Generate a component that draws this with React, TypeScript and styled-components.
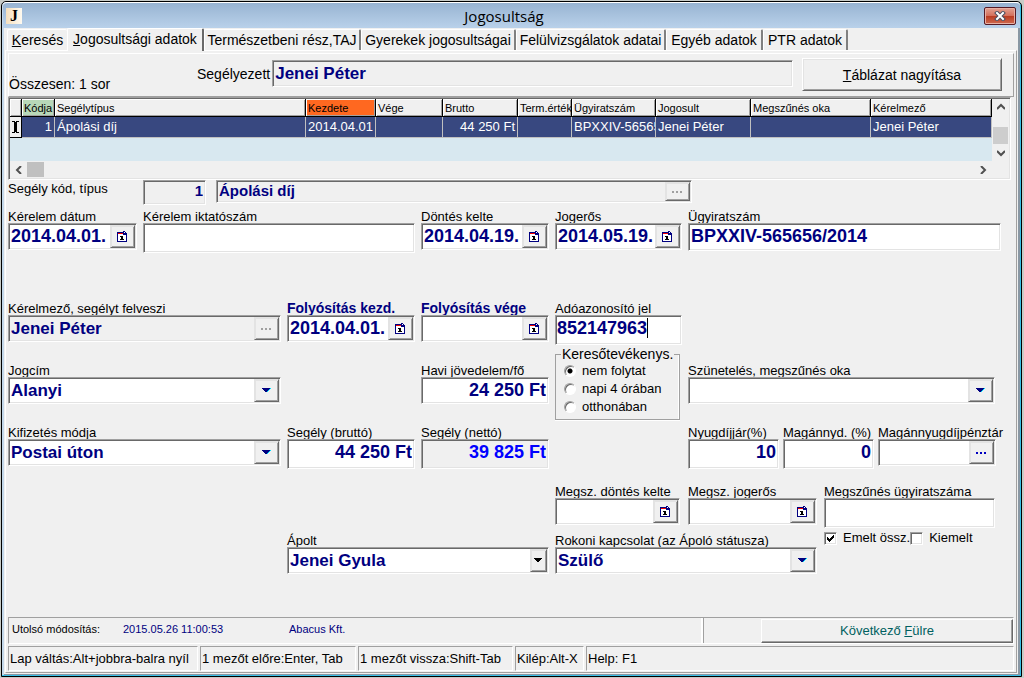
import React from 'react';
import styled, { createGlobalStyle, css } from 'styled-components';

const face = '#f0f0f0';
const shade = '#a0a0a0';
const dark = '#696969';
const light = '#e3e3e3';
const navy = '#000080';

const Global = createGlobalStyle`
  *, *::before, *::after { box-sizing: border-box; }
  html, body { margin: 0; }
  body { background: #c8ccc8; color: #000; font: 14px/16px "Liberation Sans", Arial, sans-serif; }
  button, input, select { font: inherit; color: inherit; margin: 0; border-radius: 0; }
`;

const sunken = css`
  border: 1px solid;
  border-color: ${shade} #fff #fff ${shade};
  box-shadow: inset 1px 1px ${dark}, inset -1px -1px ${light};
  padding: 1px;
`;
const raised = css`
  border: 1px solid;
  border-color: #fff ${dark} ${dark} #fff;
  box-shadow: inset 1px 1px ${light}, inset -1px -1px ${shade};
`;

const Window = styled.main`
  display: flex;
  flex-direction: column;
  min-height: calc(100vh - 2px);
  margin: 1px 2px 1px 1px;
  border: 1px solid #000;
  border-radius: 5px 5px 0 0;
  background: ${face};
  box-shadow: inset -1px -1px #38c0e8, inset 2px 0 #c4d8ea, inset -3px -2px #8a97a3;
`;
const TitleBar = styled.header`
  display: grid;
  grid-template-columns: 32px 1fr 48px;
  align-items: center;
  height: 26px;
  margin: 0 1px;
  padding: 0 2px 0 3px;
  border-top: 1px solid #fff;
  border-radius: 4px 4px 0 0;
  background: linear-gradient(#98b4d2, #b9d1ea);
`;
const AppIcon = styled.span`
  width: 16px;
  height: 16px;
  background: linear-gradient(90deg, #f5dfbd, #fffaf0);
  font: bold 16px/16px "Liberation Serif", serif;
  text-align: center;
`;
const Title = styled.h1`
  margin: 0;
  font: 15px/22px "Open Sans", sans-serif;
  text-align: center;
`;
const Close = styled.button`
  justify-self: end;
  display: grid;
  place-items: center;
  width: 32px;
  height: 18px;
  margin-right: 2px;
  padding: 0;
  border: 1px solid #551a25;
  border-radius: 2px;
  background: linear-gradient(#e2a292, #d4705c 48%, #b83a20 50%, #cf6a50);
  box-shadow: inset 0 0 0 1px #e8b0a4;
`;
const Tabs = styled.nav`
  display: flex;
  align-items: flex-end;
  height: 22px;
  margin: 0 5px;
`;
const Tab = styled.button<{ $active?: boolean; $width: number }>`
  flex: 0 1 ${p => p.$width}px;
  height: ${p => (p.$active ? 23 : 21)}px;
  margin-bottom: ${p => (p.$active ? -1 : 0)}px;
  padding: 0 0 ${p => (p.$active ? 3 : 0)}px;
  border: 0 solid #fff;
  border-width: 1px 0 0 1px;
  border-right: 2px solid ${p => (p.$active ? dark : '#808080')};
  border-radius: 2px 2px 0 0;
  background: ${face};
  white-space: nowrap;
  ${p => p.$active && 'position: relative;'}
`;
const FirstTab = styled(Tab)`
  border-right-width: 0;
`;
const Page = styled.section`
  flex: 1;
  display: flex;
  flex-direction: column;
  margin: 0 4px 3px 3px;
  padding: 2px 0 0 2px;
  border: 0 solid #fff;
  border-width: 1px 0 0 1px;
  border-right: 1px solid ${shade};
  border-bottom: 1px solid ${shade};
`;
const Inner = styled.div`
  flex: 1;
  display: flex;
  flex-direction: column;
  margin-right: 2px;
`;
const Summary = styled.div`
  display: flex;
  height: 44px;
  border: 1px solid;
  border-color: #fff ${shade} ${shade} #fff;
`;
const RowCount = styled.span`
  width: 188px;
  padding-top: 22px;
  white-space: nowrap;
`;
const Beneficiary = styled.label`
  flex: 1;
  display: flex;
  gap: 2px;
  padding: 6px 9px 10px 0;
  white-space: nowrap;
  span { padding-top: 6px; }
  div { flex: 1; }
`;
const Enlarge = styled.button`
  ${raised}
  width: 200px;
  height: 33px;
  margin: 4px 11px 0 0;
  background: ${face};
`;

const GridFrame = styled.div`
  ${sunken}
  display: grid;
  grid-template-columns: 1fr 17px;
  grid-template-rows: 62px 17px;
  margin-right: 3px;
`;
const GridBody = styled.div`
  overflow: hidden;
  background: #d8e8f0;
`;
const Table = styled.table`
  width: 100%;
  table-layout: fixed;
  border-collapse: separate;
  border-spacing: 0;
`;
const Th = styled.th<{ $bg?: string }>`
  height: 18px;
  padding: 0 0 0 2px;
  overflow: hidden;
  border: 0 solid #000;
  border-width: 0 1px 1px 0;
  background: ${p => p.$bg || face};
  box-shadow: inset 1px 1px #fff, inset -1px -1px ${shade};
  font: 11px/16px "Liberation Sans", sans-serif;
  text-align: left;
  white-space: nowrap;
`;
const Td = styled.td<{ $right?: boolean }>`
  height: 21px;
  padding: 0 2px;
  overflow: hidden;
  border: 0 solid #c0c0c0;
  border-width: 0 1px 1px 0;
  background: #384880;
  color: #fff;
  font: 13px/18px "Liberation Sans", sans-serif;
  text-align: ${p => (p.$right ? 'right' : 'left')};
  white-space: nowrap;
`;
const Marker = styled(Td)`
  padding: 0;
  border-color: #000;
  background: ${face};
  color: #000;
  svg { display: block; margin: 0 auto; }
`;
const VScroll = styled.div`
  display: flex;
  flex-direction: column;
  align-items: center;
  justify-content: space-between;
  padding: 4px 0;
`;
const VThumb = styled.span`
  width: 15px;
  height: 17px;
  margin: 11px 0 0;
  background: #cdcdcd;
`;
const HScroll = styled.div`
  display: flex;
  align-items: center;
  gap: 4px;
  padding: 0 5px;
  svg:last-child { margin-left: auto; }
`;
const HThumb = styled.span`
  width: 17px;
  height: 15px;
  background: #c0c0c0;
`;

const TypeRow = styled.div`
  display: grid;
  grid-template-columns: 125px 63px 476px;
  align-items: start;
  height: 28px;
  column-gap: 10px;
`;
const Form = styled.form`
  display: grid;
  grid-template-columns: 129fr 138fr 128fr 128fr 127fr 326fr;
  grid-template-rows: 92px 62px 62px 59px 49px auto;
  column-gap: 6px;
  align-items: start;
`;
const Area = styled.div<{ $col: string; $row: string }>`
  grid-column: ${p => p.$col};
  grid-row: ${p => p.$row};
  min-width: 0;
`;
const Caption = styled.label<{ $strong?: boolean }>`
  display: block;
  height: 15px;
  font-size: 13px;
  line-height: 17px;
  white-space: nowrap;
  ${p => p.$strong && css`
    color: ${navy};
    font-size: 14px;
    font-weight: bold;
  `}
`;
const FieldWrap = styled.div`
  min-width: 0;
`;
const Box = styled.div<{ $h?: number; $ro?: boolean }>`
  ${sunken}
  position: relative;
  display: flex;
  height: ${p => p.$h || 27}px;
  background: ${p => (p.$ro ? face : '#fff')};
`;
const valueText = css<{ $num?: boolean; $color?: string }>`
  flex: 1;
  min-width: 0;
  border: 0;
  outline: 0;
  background: transparent;
  color: ${p => p.$color || navy};
  font: bold ${p => (p.$num ? 18 : 17)}px/20px "Liberation Sans", sans-serif;
`;
const Value = styled.input<{ $num?: boolean; $right?: boolean; $color?: string }>`
  ${valueText}
  height: 23px;
  padding: 0 1px;
  text-align: ${p => (p.$right ? 'right' : 'left')};
`;
const SmallValue = styled(Value)`
  height: 18px;
  font-size: 15px;
  line-height: 18px;
`;
const CaretValue = styled(Value)`
  flex: none;
  field-sizing: content;
  padding: 0;
`;
const Caret = styled.i`
  width: 1px;
  height: 20px;
  margin-top: 1px;
  background: #000;
`;
const Choice = styled.select`
  ${valueText}
  appearance: none;
  height: 23px;
  padding: 0 1px;
`;
const FieldButton = styled.button<{ $w?: number }>`
  ${raised}
  border-color: ${light} ${dark} ${dark} ${light};
  display: grid;
  place-items: center;
  flex: none;
  width: ${p => p.$w || 25}px;
  padding: 0;
  background: ${face};
`;
const Arrow = styled.span<{ $w?: number }>`
  ${raised}
  border-color: ${light} ${dark} ${dark} ${light};
  display: grid;
  place-items: center;
  flex: none;
  width: ${p => p.$w || 25}px;
  background: ${face};
`;
const Group = styled.fieldset`
  display: flex;
  flex-direction: column;
  gap: 2px;
  height: 73px;
  margin: 2px 2px 0 0;
  padding: 1px 0 0 8px;
  border: 1px solid ${shade};
  box-shadow: inset -1px 0 #fff, 0 1px #fff;
  legend { margin-left: -3px; padding: 0 1px; line-height: 15px; white-space: nowrap; }
`;
const Option = styled.label`
  display: flex;
  align-items: center;
  gap: 6px;
  font-size: 13px;
  white-space: nowrap;
`;
const Radio = styled.input`
  appearance: none;
  width: 12px;
  height: 12px;
  border: 1px solid;
  border-color: ${shade} #fff #fff ${shade};
  border-radius: 50%;
  background: #fff;
  box-shadow: inset 1px 1px ${dark};
  &:checked { background: radial-gradient(circle, #000 0 2px, #fff 3px); }
`;
const Check = styled.input`
  ${sunken}
  appearance: none;
  width: 13px;
  height: 13px;
  background: #fff;
`;
const CheckBox = styled.span`
  display: grid;
  > * { grid-area: 1 / 1; }
  svg { z-index: 1; pointer-events: none; }
`;
const Checks = styled.div`
  display: flex;
  align-items: center;
  padding-top: 2px;
`;
const Bottom = styled.div`
  display: grid;
  grid-template-columns: 262fr 171fr 12fr;
  column-gap: 7px;
`;
const Pair = styled.div`
  display: grid;
  grid-template-columns: 125fr 129fr;
  column-gap: 8px;
  height: 49px;
`;
const Pension = styled.div`
  display: grid;
  grid-template-columns: 91fr 91fr 118fr 14fr;
  column-gap: 4px;
`;
const Indent = styled.div<{ $right: number }>`
  padding-right: ${p => p.$right}px;
`;

const Modified = styled.div`
  display: grid;
  grid-template-columns: 695fr 309fr;
  height: 27px;
  margin-top: auto;
  border: 1px solid;
  border-color: ${shade} #fff #fff ${shade};
  font: 11px/22px "Liberation Sans", sans-serif;
`;
const ModifiedInfo = styled.div`
  display: grid;
  grid-template-columns: 111px 166px 1fr;
  padding-left: 3px;
  border-right: 1px solid ${shade};
  box-shadow: inset -2px 0 #fff;
  color: ${navy};
  b { color: #000; font-weight: normal; }
`;
const NextWrap = styled.div`
  display: flex;
  padding: 1px 0 0 57px;
`;
const Next = styled.button`
  flex: 1;
  border: 1px solid;
  border-color: #fff ${dark} ${dark} #fff;
  box-shadow: inset -1px -1px ${shade};
  background: ${face};
  color: #006060;
  font: 13px/16px "Liberation Sans", sans-serif;
`;
const Hints = styled.footer`
  display: grid;
  grid-template-columns: 190px 156px 155px 69px 1fr;
  column-gap: 2px;
  margin: 2px 0 1px;
`;
const Hint = styled.span`
  height: 25px;
  padding-left: 1px;
  border: 1px solid;
  border-color: ${shade} #fff #fff ${shade};
  font-size: 13px;
  line-height: 23px;
  white-space: nowrap;
`;

const Triangle = ({ color = navy }: { color?: string }) => (
  <svg width="9" height="5" viewBox="0 0 9 5" shapeRendering="crispEdges">
    {color === navy && <path d="M2 0h7v1H8v1H7v1H6v1H5z" fill="#00e0ff" />}
    <path d="M0 0h8v1H7v1H6v1H5v1H3V3H2V2H1V1H0z" fill={color} />
  </svg>
);
const Dots = ({ color = '#0000c0' }: { color?: string }) => (
  <svg width="11" height="2" viewBox="0 0 11 2" shapeRendering="crispEdges">
    <path d="M0 0h2v2H0zM4 0h2v2H4zM8 0h2v2H8z" fill={color} />
  </svg>
);
const Calendar = () => (
  <svg width="11" height="11" viewBox="0 0 11 11" shapeRendering="crispEdges">
    <path d="M0 1h6V0h2v1h1v1h1v9H0z" fill={navy} />
    <path d="M1 3h5v1h3v6H1z" fill="#fff" />
    <path d="M7 1h1v1H7z" fill="#fff" />
    <path d="M1 2h5v1H1z" fill="#f00000" />
    <path d="M4 5h2v3h1v1H3V8h1V6H3V5h1z" fill="#000" />
  </svg>
);
const Chevron = ({ d }: { d: string }) => (
  <svg width="8" height="8" viewBox="0 0 8 8">
    <path d={d} fill="none" stroke="#505050" strokeWidth="2" />
  </svg>
);
const Tick = () => (
  <svg width="13" height="13" viewBox="0 0 13 13" shapeRendering="crispEdges">
    <path d="M3 5h1v1h1v1h1V6h1V5h1V4h1V3h1v3H9v1H8v1H7v1H6v1H5V9H4V8H3z" fill="#000" />
  </svg>
);

type FieldProps = {
  id: string; label: string; value?: string; strong?: boolean; kind?: 'date' | 'dots';
  h?: number; ro?: boolean; num?: boolean; right?: boolean; color?: string;
};
const Field = ({ id, label, value = '', strong, kind, h, ro, num, right, color }: FieldProps) => (
  <FieldWrap>
    <Caption htmlFor={id} $strong={strong}>{label}</Caption>
    <Box $h={h} $ro={ro}>
      <Value id={id} defaultValue={value} readOnly={ro} $num={num || kind === 'date'} $right={right} $color={color} />
      {kind === 'date' && <FieldButton type="button" aria-label="Naptár"><Calendar /></FieldButton>}
      {kind === 'dots' && <FieldButton type="button" aria-label="Tallózás"><Dots color={ro ? shade : undefined} /></FieldButton>}
    </Box>
  </FieldWrap>
);
const Select = ({ id, label, value, black }: { id: string; label: string; value: string; black?: boolean }) => (
  <FieldWrap>
    <Caption htmlFor={id}>{label}</Caption>
    <Box>
      <Choice id={id} defaultValue={value}><option>{value}</option></Choice>
      <Arrow $w={black ? 17 : 25}><Triangle color={black ? '#000' : undefined} /></Arrow>
    </Box>
  </FieldWrap>
);

const columns = [
  { w: 12, h: '' }, { w: 33, h: 'Kódja', bg: '#b8d8b8' }, { w: 251, h: 'Segélytípus' },
  { w: 70, h: 'Kezdete', bg: '#ff6820' }, { w: 67, h: 'Vége' }, { w: 75, h: 'Brutto' },
  { w: 54, h: 'Term.érték' }, { w: 84, h: 'Ügyiratszám' }, { w: 95, h: 'Jogosult' },
  { w: 120, h: 'Megszűnés oka' }, { w: 121, h: 'Kérelmező' },
];

export default function App() {
  return (
    <>
      <Global />
      <Window>
        <TitleBar>
          <AppIcon>J</AppIcon>
          <Title>Jogosultság</Title>
          <Close aria-label="Bezárás">
            <svg width="12" height="10" viewBox="0 0 12 10">
              <path d="M3 2l6 6M9 2L3 8" stroke="#4a4f60" strokeWidth="4" strokeLinecap="square" />
              <path d="M3 2l6 6M9 2L3 8" stroke="#fff" strokeWidth="2" strokeLinecap="square" />
            </svg>
          </Close>
        </TitleBar>
        <Tabs>
          <FirstTab $width={60}><u>K</u>eresés</FirstTab>
          <Tab $active $width={137}><u>J</u>ogosultsági adatok</Tab>
          <Tab $width={157}>Természetbeni rész,TAJ</Tab>
          <Tab $width={155}>Gyerekek jogosultságai</Tab>
          <Tab $width={150}>Felülvizsgálatok adatai</Tab>
          <Tab $width={97}>Egyéb adatok</Tab>
          <Tab $width={85}>PTR adatok</Tab>
        </Tabs>
        <Page>
          <Inner>
            <Summary>
              <RowCount>Összesen: 1 sor</RowCount>
              <Beneficiary>
                <span>Segélyezett</span>
                <Box $ro><Value readOnly defaultValue="Jenei Péter" /></Box>
              </Beneficiary>
              <Enlarge><u>T</u>áblázat nagyítása</Enlarge>
            </Summary>
            <GridFrame>
              <GridBody>
                <Table>
                  <colgroup>{columns.map((c, i) => <col key={i} width={c.w} />)}</colgroup>
                  <thead>
                    <tr>{columns.map((c, i) => <Th key={i} $bg={c.bg}>{c.h}</Th>)}</tr>
                  </thead>
                  <tbody>
                    <tr>
                      <Marker>
                        <svg width="7" height="12" viewBox="0 0 7 12" shapeRendering="crispEdges">
                          <path d="M0 0h3v1h1V0h3v1H5v10h2v1H4v-1H3v1H0v-1h2V1H0z" />
                        </svg>
                      </Marker>
                      <Td $right>1</Td><Td>Ápolási díj</Td><Td>2014.04.01</Td><Td />
                      <Td $right>44 250 Ft</Td><Td /><Td>BPXXIV-565656/2014</Td><Td>Jenei Péter</Td><Td />
                      <Td>Jenei Péter</Td>
                    </tr>
                  </tbody>
                </Table>
              </GridBody>
              <VScroll>
                <Chevron d="M0 6l4-4 4 4" /><VThumb /><Chevron d="M0 2l4 4 4-4" />
              </VScroll>
              <HScroll>
                <Chevron d="M6 0L2 4l4 4" /><HThumb /><Chevron d="M2 0l4 4-4 4" />
              </HScroll>
            </GridFrame>
            <TypeRow>
              <Caption htmlFor="kod">Segély kód, típus</Caption>
              <Box $h={25} $ro><SmallValue id="kod" readOnly defaultValue="1" $right /></Box>
              <Box $h={23} $ro>
                <SmallValue aria-label="Típus" readOnly defaultValue="Ápolási díj" />
                <FieldButton type="button" aria-label="Tallózás"><Dots color={shade} /></FieldButton>
              </Box>
            </TypeRow>
            <Form>
              <Area $col="1" $row="1"><Field id="kerdat" label="Kérelem dátum" value="2014.04.01." kind="date" /></Area>
              <Area $col="2 / 4" $row="1"><Field id="ikt" label="Kérelem iktatószám" h={30} /></Area>
              <Area $col="4" $row="1"><Field id="dontes" label="Döntés kelte" value="2014.04.19." kind="date" /></Area>
              <Area $col="5" $row="1"><Field id="jogeros" label="Jogerős" value="2014.05.19." kind="date" /></Area>
              <Area $col="6" $row="1">
                <Indent $right={13}><Field id="ugy" label="Ügyiratszám" value="BPXXIV-565656/2014" h={28} num /></Indent>
              </Area>

              <Area $col="1 / 3" $row="2"><Field id="kerelmezo" label="Kérelmező, segélyt felveszi" value="Jenei Péter" kind="dots" ro /></Area>
              <Area $col="3" $row="2"><Field id="fkezd" label="Folyósítás kezd." value="2014.04.01." kind="date" strong /></Area>
              <Area $col="4" $row="2"><Field id="fvege" label="Folyósítás vége" kind="date" strong /></Area>
              <Area $col="5" $row="2 / 4">
                <Caption htmlFor="ado">Adóazonosító jel</Caption>
                <Box $h={30}><CaretValue id="ado" defaultValue="852147963" $num /><Caret /></Box>
                <Group>
                  <legend>Keresőtevékenys.</legend>
                  <Option><Radio type="radio" name="ker" defaultChecked />nem folytat</Option>
                  <Option><Radio type="radio" name="ker" />napi 4 órában</Option>
                  <Option><Radio type="radio" name="ker" />otthonában</Option>
                </Group>
              </Area>

              <Area $col="1 / 3" $row="3"><Select id="jogcim" label="Jogcím" value="Alanyi" /></Area>
              <Area $col="4" $row="3"><Field id="havi" label="Havi jövedelem/fő" value="24 250 Ft" num right /></Area>
              <Area $col="6" $row="3">
                <Indent $right={19}><Select id="szunet" label="Szünetelés, megszűnés oka" value="" /></Indent>
              </Area>

              <Area $col="1 / 3" $row="4"><Select id="kifiz" label="Kifizetés módja" value="Postai úton" /></Area>
              <Area $col="3" $row="4"><Field id="brutto" label="Segély (bruttó)" value="44 250 Ft" h={30} num right /></Area>
              <Area $col="4" $row="4"><Field id="netto" label="Segély (nettó)" value="39 825 Ft" h={30} num right ro color="#0000ff" /></Area>
              <Area $col="6" $row="4">
                <Pension>
                  <Field id="nyug" label="Nyugdíjjár(%)" value="10" h={30} num right />
                  <Field id="magan" label="Magánnyd. (%)" value="0" h={30} num right />
                  <Field id="penztar" label="Magánnyugdíjpénztár" kind="dots" />
                </Pension>
              </Area>

              <Area $col="3 / 5" $row="6"><Select id="apolt" label="Ápolt" value="Jenei Gyula" black /></Area>
              <Area $col="5 / 7" $row="5 / 7">
                <Bottom>
                  <FieldWrap>
                    <Pair>
                      <Field id="mdont" label="Megsz. döntés kelte" kind="date" />
                      <Field id="mjog" label="Megsz. jogerős" kind="date" />
                    </Pair>
                    <Select id="rokoni" label="Rokoni kapcsolat (az Ápoló státusza)" value="Szülő" />
                  </FieldWrap>
                  <FieldWrap>
                    <Field id="mugy" label="Megszűnés ügyiratszáma" h={30} />
                    <Checks>
                      <Option><CheckBox><Check type="checkbox" defaultChecked /><Tick /></CheckBox>Emelt össz.</Option>
                      <Option><CheckBox><Check type="checkbox" /></CheckBox>Kiemelt</Option>
                    </Checks>
                  </FieldWrap>
                </Bottom>
              </Area>
            </Form>
            <Modified>
              <ModifiedInfo><b>Utolsó módosítás:</b><span>2015.05.26 11:00:53</span><span>Abacus Kft.</span></ModifiedInfo>
              <NextWrap><Next>Következő <u>F</u>ülre</Next></NextWrap>
            </Modified>
            <Hints>
              <Hint>Lap váltás:Alt+jobbra-balra nyíl</Hint>
              <Hint>1 mezőt előre:Enter, Tab</Hint>
              <Hint>1 mezőt vissza:Shift-Tab</Hint>
              <Hint>Kilép:Alt-X</Hint>
              <Hint>Help: F1</Hint>
            </Hints>
          </Inner>
        </Page>
      </Window>
    </>
  );
}
